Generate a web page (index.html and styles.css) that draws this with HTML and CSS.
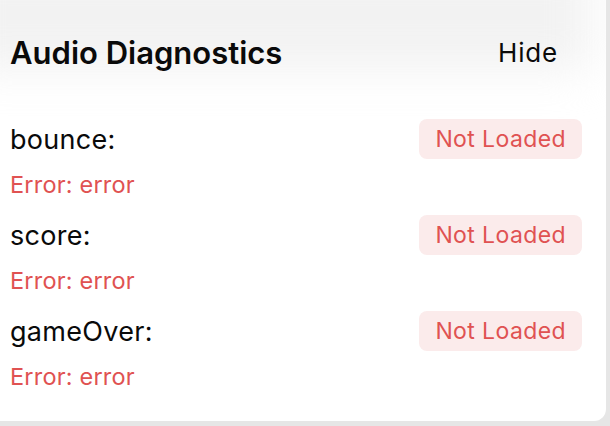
FILE: index.html
```html
<!DOCTYPE html>
<html>
<head>
<meta charset="utf-8">
<link rel="stylesheet" href="styles.css">
</head>
<body>
<div class="page">
  <div class="card">
    <div class="header">
      <div class="header-glow"></div>
      <h1 class="title">Audio Diagnostics</h1>
      <span class="hide">Hide</span>
    </div>
    <div class="list">
      <div class="item">
        <div class="row">
          <span class="name">bounce:</span>
          <span class="badge">Not Loaded</span>
        </div>
        <div class="error">Error: error</div>
      </div>
      <div class="item">
        <div class="row">
          <span class="name">score:</span>
          <span class="badge">Not Loaded</span>
        </div>
        <div class="error">Error: error</div>
      </div>
      <div class="item">
        <div class="row">
          <span class="name">gameOver:</span>
          <span class="badge">Not Loaded</span>
        </div>
        <div class="error">Error: error</div>
      </div>
    </div>
  </div>
</div>
</body>
</html>
```
FILE: styles.css
```css
html, body {
  margin: 0;
  padding: 0;
  background: #e6e6e6;
  font-family: Inter, "Noto Sans", sans-serif;
}
.page {
  width: 610px;
  height: 426px;
  overflow: hidden;
}
.card {
  width: 606px;
  height: 421px;
  background: #ffffff;
  border-bottom-right-radius: 12px;
  overflow: hidden;
}
.header {
  position: relative;
  height: 104px;
  display: flex;
  align-items: center;
  justify-content: space-between;
  padding: 0 48px 0 10px;
  box-sizing: border-box;
}
.header-glow {
  position: absolute;
  left: -40px;
  top: -40px;
  width: 630px;
  height: 110px;
  background: #f2f2f2;
  filter: blur(22px);
  z-index: 0;
}
.title {
  position: relative;
  margin: 0;
  font-size: 31px;
  font-weight: 600;
  color: #0a0a0a;
  letter-spacing: 0;
}
.hide {
  position: relative;
  font-size: 26px;
  letter-spacing: 0.8px;
  color: #0a0a0a;
}
.list {
  padding: 15px 24px 0 10px;
}
.item {
  height: 96px;
  box-sizing: border-box;
}
.row {
  display: flex;
  justify-content: space-between;
  align-items: center;
  height: 40px;
}
.name {
  font-size: 27px;
  letter-spacing: 0.3px;
  color: #0a0a0a;
}
.badge {
  background: #fbebeb;
  color: #e05252;
  font-size: 23px;
  letter-spacing: 0.4px;
  border-radius: 8px;
  padding: 6px 16px;
  line-height: 28px;
}
.error {
  margin-top: 11px;
  font-size: 23.5px;
  letter-spacing: 0.2px;
  line-height: 29px;
  color: #e05252;
}
```
